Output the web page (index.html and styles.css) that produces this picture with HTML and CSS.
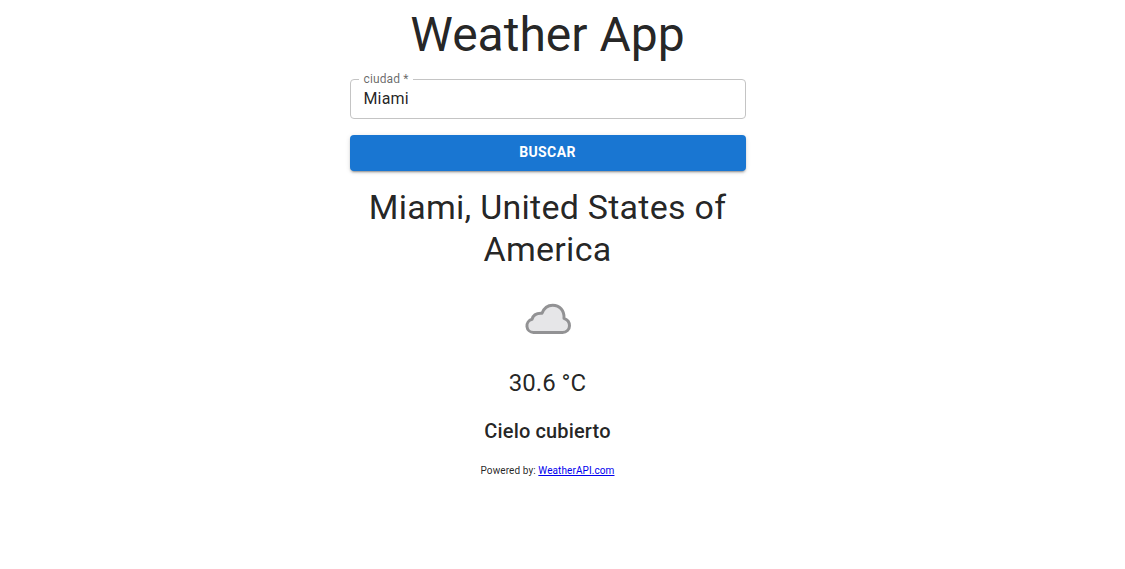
FILE: index.html
```html
<!DOCTYPE html>
<html lang="es">
<head>
<meta charset="utf-8">
<meta name="viewport" content="width=device-width, initial-scale=1">
<title>Weather App</title>
<link rel="stylesheet" href="styles.css">
</head>
<body>
<main class="container">
  <h1 class="title">Weather App</h1>
  <form class="search">
    <fieldset class="field">
      <legend class="field-legend"><label for="city">ciudad *</label></legend>
      <input class="field-input" id="city" type="text" value="Miami" required>
    </fieldset>
    <button class="button" type="submit">Buscar</button>
  </form>
  <section class="weather">
    <h2 class="place">Miami, United States of America</h2>
    <svg class="icon" viewBox="0 0 64 64" role="img" aria-label="Cielo cubierto">
      <path d="M17.500 45.500a6.700 6.700 0 0 1-1.500-13.200C17 28.500 20.500 26 26 26.300C28 21 32 18.200 36.700 18.200C43.500 18.200 48.500 23.500 48 31.300C51.500 32.500 53.500 35.300 53.500 38.700C53.500 42.500 50.500 45.500 46.500 45.500z" fill="#e6e6e8" stroke="#929294" stroke-width="3" stroke-linejoin="round"/>
    </svg>
    <p class="temperature">30.6 °C</p>
    <p class="condition">Cielo cubierto</p>
  </section>
  <footer class="credit">Powered by: <a class="credit-link" href="https://www.weatherapi.com/">WeatherAPI.com</a></footer>
</main>
</body>
</html>
```
FILE: styles.css
```css
* {
  box-sizing: border-box;
}

body {
  margin: 0;
  padding-right: 30px;
  font-family: Roboto, "Liberation Sans", sans-serif;
  color: rgba(0, 0, 0, 0.87);
  background: #fff;
}

.container {
  width: 100%;
  max-width: 444px;
  margin: 0 auto;
  padding: 7px 24px 24px;
  text-align: center;
}

.title {
  margin: 0;
  font-size: 48px;
  font-weight: 400;
  line-height: 56px;
}

.search {
  display: grid;
  gap: 16px;
  margin-top: 9px;
}

.field {
  min-width: 0;
  margin: 0;
  padding: 0 13px;
  border: 1px solid #c4c4c4;
  border-radius: 4px;
  text-align: left;
}

.field-legend {
  margin-left: -5px;
  padding: 0 5px;
  font-size: 12px;
  line-height: 14px;
  letter-spacing: 0.00938em;
  color: rgba(0, 0, 0, 0.6);
}

.field-input {
  display: block;
  width: 100%;
  height: 32px;
  padding: 0 0 8px;
  border: 0;
  outline: 0;
  background: transparent;
  font: inherit;
  font-size: 16px;
  letter-spacing: 0.00938em;
  color: inherit;
}

.button {
  height: 36px;
  padding: 0 16px 2px;
  border: 0;
  border-radius: 4px;
  background: #1976d2;
  box-shadow: 0 3px 1px -2px rgba(0, 0, 0, 0.2), 0 2px 2px rgba(0, 0, 0, 0.14), 0 1px 5px rgba(0, 0, 0, 0.12);
  font: inherit;
  font-size: 14px;
  font-weight: 700;
  letter-spacing: 0.02857em;
  text-transform: uppercase;
  color: #fff;
  cursor: pointer;
}

.weather {
  display: grid;
  justify-items: center;
  margin-top: 15px;
}

.place {
  margin: 0;
  font-size: 34px;
  font-weight: 400;
  line-height: 42px;
  letter-spacing: 0.00735em;
}

.icon {
  width: 64px;
  height: 64px;
  margin: 17px 0 16px;
}

.temperature {
  margin: 0;
  font-size: 24px;
  line-height: 32px;
}

.condition {
  margin: 16px 0;
  font-size: 20px;
  font-weight: 500;
  line-height: 32px;
  letter-spacing: 0.0075em;
}

.credit {
  font-size: 10px;
  line-height: 16px;
  letter-spacing: 0.00938em;
}

.credit-link {
  color: #0000ee;
}
```
